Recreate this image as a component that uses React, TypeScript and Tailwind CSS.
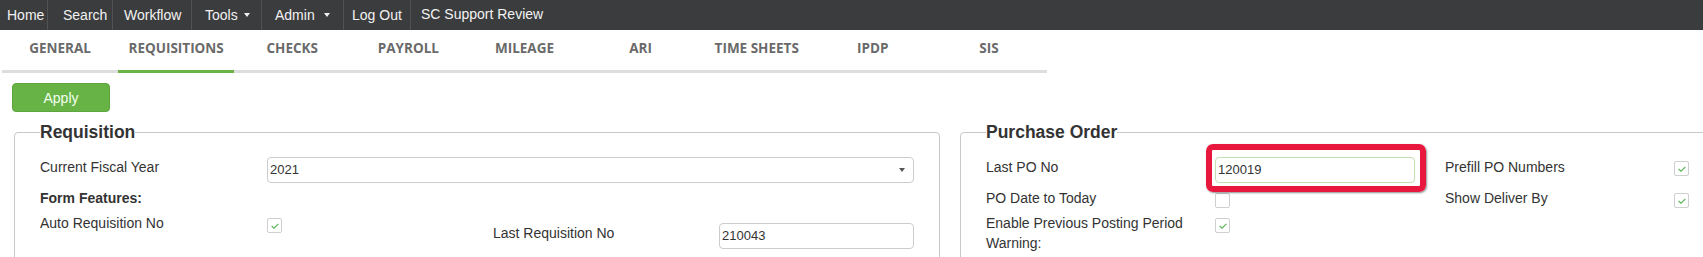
const navItems = [
  { label: "Home", w: "w-[48px]", pl: "pl-[7px]" },
  { label: "Search", w: "w-[65px]", pl: "pl-[15px]" },
  { label: "Workflow", w: "w-[79px]", pl: "pl-[11px]" },
  { label: "Tools", w: "w-[70px]", pl: "pl-[13px]", caret: "ml-[6px]" },
  { label: "Admin", w: "w-[82px]", pl: "pl-[13px]", caret: "ml-[9px]" },
  { label: "Log Out", w: "w-[67px]", pl: "pl-[8px]" },
];

const tabs = [
  "GENERAL",
  "REQUISITIONS",
  "CHECKS",
  "PAYROLL",
  "MILEAGE",
  "ARI",
  "TIME SHEETS",
  "IPDP",
  "SIS",
];

function Checkbox({ checked, className = "mt-[5px]" }: { checked?: boolean; className?: string }) {
  return (
    <span
      className={`${className} flex size-[15px] items-center justify-center rounded-[2px] border border-[#cfcfcf] bg-white`}
    >
      {checked && (
        <svg width="8" height="6" viewBox="0 0 8 6">
          <path d="M0.6 3 L3 5.2 L7.4 0.8" fill="none" stroke="#5fb65a" strokeWidth="1.2" />
        </svg>
      )}
    </span>
  );
}

function Label({ children, className = "" }: { children: React.ReactNode; className?: string }) {
  return <div className={`text-[14px] leading-[20px] text-[#333] ${className}`}>{children}</div>;
}

function TextBox({ value, className = "" }: { value: string; className?: string }) {
  return (
    <div
      className={`flex h-[26px] items-center rounded-[4px] border pl-[2px] text-[13px] text-[#333] ${className}`}
    >
      {value}
    </div>
  );
}

export default function App() {
  return (
    <div className="h-[257px] w-full overflow-hidden bg-white font-['Liberation_Sans',Arial,sans-serif]">
      {/* top nav */}
      <nav className="flex h-[30px] bg-[#3b3c3e] text-[14px] leading-[28px] text-[#f2f2f2]">
        {navItems.map((item) => (
          <div
            key={item.label}
            className={`flex items-center border-r border-[#515254] ${item.w} ${item.pl}`}
          >
            <span>{item.label}</span>
            {item.caret && (
              <span
                className={`${item.caret} h-0 w-0 border-x-[3px] border-t-[4px] border-x-transparent border-t-[#f2f2f2]`}
              />
            )}
          </div>
        ))}
        <div className="pl-[10px]">SC Support Review</div>
      </nav>

      {/* tabs */}
      <div className="ml-[2px] grid w-[1045px] grid-cols-9 font-['Open_Sans',sans-serif] text-[13.5px] font-bold leading-[20px] text-[#6a6a6a]">
        {tabs.map((t) => (
          <div
            key={t}
            className={`pt-[8px] pb-[12px] text-center border-b-[3px] ${
              t === "REQUISITIONS" ? "border-[#6ab344]" : "border-[#dddddd]"
            }`}
          >
            {t}
          </div>
        ))}
      </div>

      <button className="ml-[12px] mt-[10px] flex h-[29px] w-[98px] items-center justify-center rounded-[4px] border border-[#5ea43f] bg-[#67b346] pt-[2px] text-[14px] text-[#f4fff0]">
        Apply
      </button>

      <div className="mt-[10px] flex gap-[20px] pl-[14px]">
        {/* Requisition */}
        <fieldset className="w-[926px] shrink-0 rounded-[4px] border border-[#c8c8c8] px-[25px] pt-[15px] pb-[20px]">
          <legend className="text-[17.5px] font-bold leading-[20px] text-[#333]">Requisition</legend>
          <div className="grid grid-cols-[227px_226px_226px_1fr] items-start gap-y-[5px]">
            <Label>Current Fiscal Year</Label>
            <div className="col-span-3 flex h-[26px] items-center justify-between rounded-[4px] border border-[#cccccc] pl-[2px] pr-[8px] text-[13px] text-[#333]">
              <span>2021</span>
              <span className="h-0 w-0 border-x-[3px] border-t-[4px] border-x-transparent border-t-[#555]" />
            </div>

            <Label className="col-span-4 font-bold">Form Features:</Label>

            <Label>Auto Requisition No</Label>
            <Checkbox checked />
            <Label className="mt-[10px]">Last Requisition No</Label>
            <TextBox value="210043" className="mt-[10px] border-[#cccccc]" />
          </div>
        </fieldset>

        {/* Purchase Order */}
        <fieldset className="w-[926px] shrink-0 rounded-[4px] border border-[#c8c8c8] px-[25px] pt-[15px] pb-[20px]">
          <legend className="text-[17.5px] font-bold leading-[20px] text-[#333]">Purchase Order</legend>
          <div className="grid grid-cols-[229px_230px_229px_1fr] items-start gap-y-[5px]">
            <Label>Last PO No</Label>
            <div className="relative w-[200px]">
              <TextBox value="120019" className="border-[#c2e0b2]" />
              <div className="absolute -top-[13px] -left-[9px] -right-[11px] -bottom-[9px] rounded-[7px] border-[6px] border-[#e8173d] shadow-[1px_1px_2px_rgba(0,0,0,0.45)]" />
            </div>
            <Label>Prefill PO Numbers</Label>
            <Checkbox checked className="mt-[4px]" />

            <Label>PO Date to Today</Label>
            <Checkbox />
            <Label>Show Deliver By</Label>
            <Checkbox checked />

            <Label className="pr-[10px]">Enable Previous Posting Period Warning:</Label>
            <Checkbox checked />
          </div>
        </fieldset>
      </div>
    </div>
  );
}
